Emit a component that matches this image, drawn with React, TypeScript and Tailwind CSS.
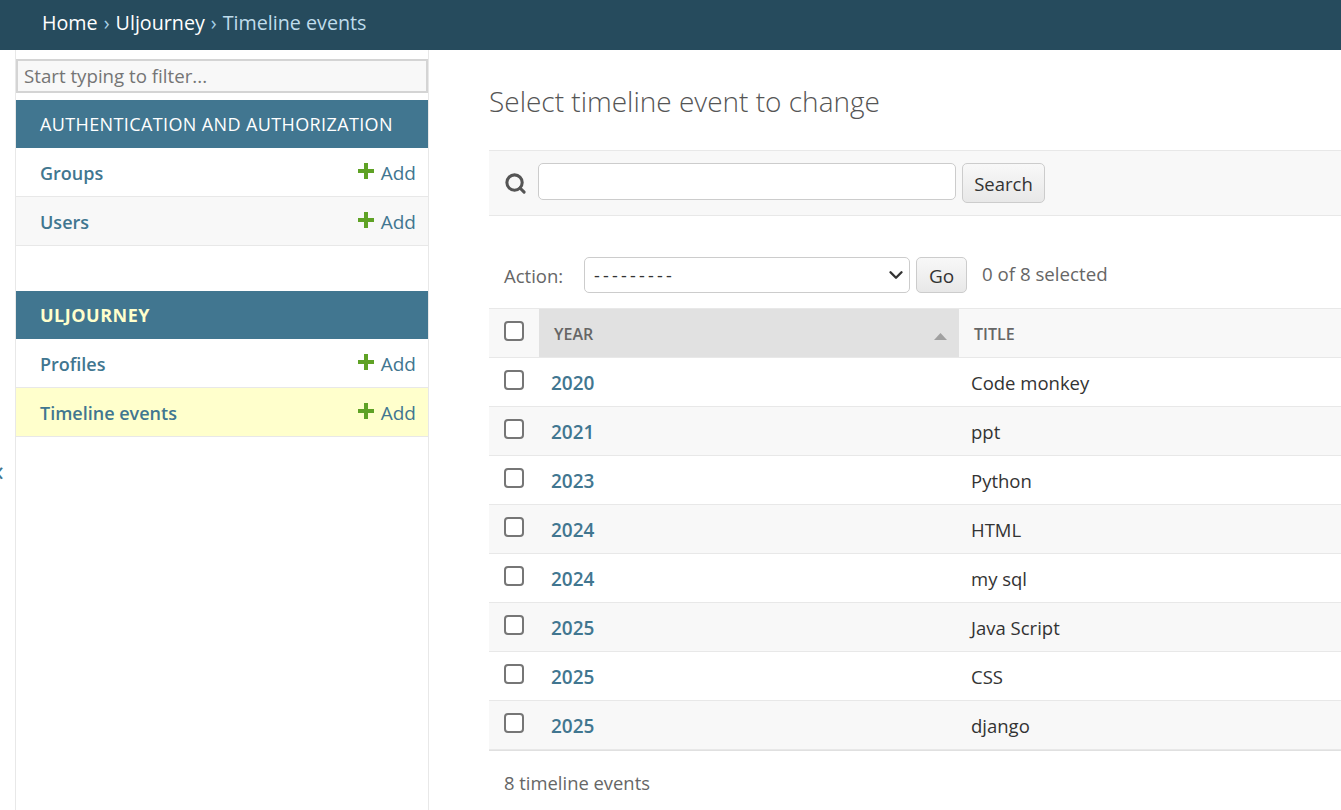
import { Search, ChevronDown } from 'lucide-react'

const font = "font-['Open_Sans','Noto_Sans',sans-serif]"

function PlusIcon() {
  return (
    <svg width="16" height="16" viewBox="0 0 16 16" className="block">
      <path d="M6 0h4v6h6v4h-6v6H6v-6H0V6h6z" fill="#5fa225" />
    </svg>
  )
}

function ModelRow({ name, bg }: { name: string; bg: string }) {
  return (
    <div className={`flex h-[49px] items-center justify-between border-b border-[#e8e8e8] pl-6 pr-3 pt-[2px] ${bg}`}>
      <span className="text-[18px] font-semibold text-[#417690]">{name}</span>
      <span className="flex items-center gap-[7px] text-[19px] text-[#417690]">
        <span className="-mt-1"><PlusIcon /></span>
        Add
      </span>
    </div>
  )
}

function Checkbox() {
  return <span className="block h-5 w-5 rounded-[4px] border-2 border-[#767676] bg-white" />
}

const rows = [
  ['2020', 'Code monkey'],
  ['2021', 'ppt'],
  ['2023', 'Python'],
  ['2024', 'HTML'],
  ['2024', 'my sql'],
  ['2025', 'Java Script'],
  ['2025', 'CSS'],
  ['2025', 'django'],
]

export default function App() {
  return (
    <div className={`h-[810px] w-[1341px] overflow-hidden bg-white ${font}`}>
      <header className="flex h-[50px] items-center bg-[#264b5d] pb-1 pl-[42px] text-[19.7px] text-[#a6d0e6]">
        <span className="text-white">Home</span>
        <span className="px-[6px]">›</span>
        <span className="text-white">Uljourney</span>
        <span className="px-[6px]">›</span>
        <span className="text-[#bfdcec]">Timeline events</span>
      </header>

      <div className="flex h-[760px]">
        <div className="relative w-[15px] shrink-0">
          <span className="absolute left-[-11px] top-[405px] text-[30px] leading-none text-[#417690]">«</span>
        </div>
        <aside className="w-[414px] shrink-0 border-x border-[#e8e8e8]">
          <div className="mt-[9px] flex h-[34px] items-center border-2 border-[#d4d4d4] bg-[#f8f8f8] px-[6px] pt-[1px] text-[18.7px] text-[#757575]">
            Start typing to filter...
          </div>
          <div className="mt-[7px] flex h-[48px] items-center bg-[#417690] pl-6 text-[18px] tracking-[0.38px] text-white">
            AUTHENTICATION AND AUTHORIZATION
          </div>
          <ModelRow name="Groups" bg="bg-white" />
          <ModelRow name="Users" bg="bg-[#f8f8f8]" />
          <div className="mt-[45px] flex h-[48px] items-center bg-[#417690] pl-6 text-[18px] font-bold tracking-[0.5px] text-[#ffffcc]">
            ULJOURNEY
          </div>
          <ModelRow name="Profiles" bg="bg-white" />
          <ModelRow name="Timeline events" bg="bg-[#ffffcc]" />
        </aside>

        <main className="ml-[60px] min-w-0 flex-1">
          <h1 className="mt-[30px] h-[43px] text-[28px] font-light leading-[43px] text-[#555555]">
            Select timeline event to change
          </h1>
          <div className="mt-[27px] flex h-[66px] items-start border-y border-[#e8e8e8] bg-[#f8f8f8] pl-[15px] pt-3">
            <Search size={23} strokeWidth={3.2} className="mt-[9px] text-[#555555]" />
            <div className="ml-[11px] h-[37px] w-[418px] rounded-[5px] border border-[#cccccc] bg-white" />
            <div className="ml-[6px] flex h-[40px] w-[83px] items-center justify-center rounded-[5px] border border-[#cccccc] bg-gradient-to-b from-[#f8f8f8] to-[#e8e8e8] pt-[2px] text-[18.5px] text-[#333333]">
              Search
            </div>
          </div>

          <div className="mt-[41px] flex h-[36px] items-center pl-[15px]">
            <span className="w-[60px] pt-[2px] text-[18.5px] text-[#666666]">Action:</span>
            <div className="ml-5 flex h-[36px] w-[326px] items-center justify-between rounded-[5px] border border-[#cccccc] bg-white pl-[9px] pr-[2px] text-[18px] tracking-[3.2px] text-[#333333]">
              <span>---------</span>
              <ChevronDown size={22} strokeWidth={2.6} />
            </div>
            <div className="ml-[6px] flex h-[36px] w-[51px] items-center justify-center rounded-[5px] border border-[#cccccc] bg-gradient-to-b from-[#f8f8f8] to-[#e8e8e8] pt-[3px] text-[19px] text-[#333333]">
              Go
            </div>
            <span className="-mt-[2px] ml-[15px] text-[18.7px] text-[#666666]">0 of 8 selected</span>
          </div>

          <table className="mt-[15px] w-full table-fixed border-collapse">
            <thead>
              <tr className="h-[49px] border-y border-[#e8e8e8] bg-[#f8f8f8] text-left">
                <th className="w-[50px] pb-1 pl-[15px] align-middle"><Checkbox /></th>
                <th className="relative w-[420px] bg-[#e1e1e1] pl-[15px] pt-[2px] text-[16px] font-semibold text-[#666666]">
                  YEAR
                  <svg width="13" height="7" viewBox="0 0 13 7" className="absolute right-[12px] top-[24px]">
                    <path d="M6.5 0L13 7H0z" fill="#a0a0a0" />
                  </svg>
                </th>
                <th className="pl-[15px] pt-[2px] text-[16px] font-semibold text-[#666666]">TITLE</th>
              </tr>
            </thead>
            <tbody>
              {rows.map(([year, title], i) => (
                <tr key={i} className={`h-[49px] border-b border-[#e8e8e8] ${i % 2 ? 'bg-[#f8f8f8]' : 'bg-white'}`}>
                  <td className="pb-1 pl-[15px] align-middle"><Checkbox /></td>
                  <td className="pl-3 pt-[2px] text-[19px] font-semibold text-[#417690]">{year}</td>
                  <td className="pl-3 pt-[2px] text-[18.5px] text-[#333333]">{title}</td>
                </tr>
              ))}
            </tbody>
          </table>
          <div className="border-t border-[#e0e0e0] pl-[15px] pt-[18px] text-[18.4px] text-[#666666]">
            8 timeline events
          </div>
        </main>
      </div>
    </div>
  )
}
